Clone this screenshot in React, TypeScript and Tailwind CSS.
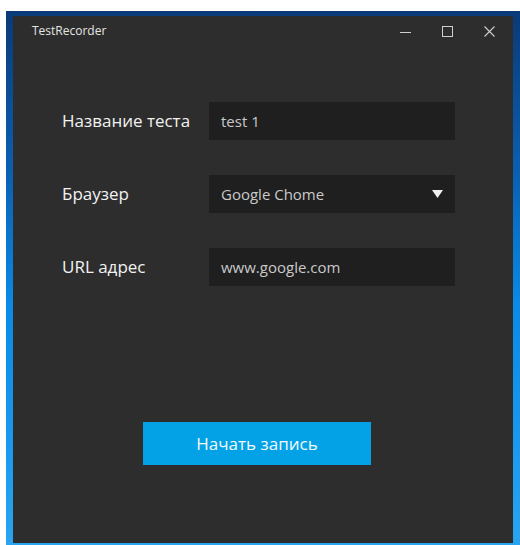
const fields = [
  { label: "Название теста", value: "test 1" },
  { label: "Браузер", value: "Google Chome", select: true },
  { label: "URL адрес", value: "www.google.com" },
];

function TitleBar() {
  return (
    <div className="flex h-[30px] items-center">
      <span className="pl-[19px] text-[12px] text-[#e6e6e6]">TestRecorder</span>
      <div className="ml-auto flex h-full pr-[3px]">
        {/* minimize / maximize / close glyphs */}
        <div className="flex w-[42px] items-center justify-center">
          <svg width="11" height="11" viewBox="0 0 11 11">
            <path d="M0 6.5H11" stroke="#cfcfcf" strokeWidth="1" />
          </svg>
        </div>
        <div className="flex w-[42px] items-center justify-center">
          <svg width="11" height="11" viewBox="0 0 11 11">
            <rect x="0.5" y="0.5" width="10" height="10" fill="none" stroke="#cfcfcf" strokeWidth="1" />
          </svg>
        </div>
        <div className="flex w-[42px] items-center justify-center">
          <svg width="11" height="11" viewBox="0 0 11 11">
            <path d="M0.5 0.5L10.5 10.5M10.5 0.5L0.5 10.5" stroke="#cfcfcf" strokeWidth="1.1" />
          </svg>
        </div>
      </div>
    </div>
  );
}

export default function App() {
  return (
    <div
      className="h-[545px] w-[520px] overflow-hidden bg-white pl-[6px] pt-[11px]"
      style={{ fontFamily: '"Open Sans", "Noto Sans", sans-serif' }}
    >
      <div className="h-full w-full bg-[linear-gradient(180deg,#0a3a78_0%,#0b5fb0_30%,#0a8ae6_55%,#1a98ee_80%,#2aa4f0_100%)] pb-[2px] pl-[7px] pr-[7px] pt-[5px]">
        <div className="flex h-full flex-col bg-[#2d2d2d]">
          <TitleBar />

          <div className="ml-[49px] mt-[56px] grid grid-cols-[147px_246px] gap-y-[35px]">
            {fields.map((f) => (
              <div key={f.label} className="contents">
                <div className="flex h-[38px] items-center text-[17px] text-[#f2f2f2]">
                  {f.label}
                </div>
                <div className="flex h-[38px] items-center bg-[#1f1f1f] pl-[12px] pr-[12px] text-[15px] text-[#c9c9c9]">
                  <span>{f.value}</span>
                  {f.select && (
                    <svg className="ml-auto" width="11" height="8" viewBox="0 0 11 8">
                      <path d="M0 0H11L5.5 8Z" fill="#f0f0f0" />
                    </svg>
                  )}
                </div>
              </div>
            ))}
          </div>

          <button className="ml-[130px] mt-[136px] flex h-[43px] w-[228px] items-center justify-center bg-[#03a2e6] text-[17px] text-[#f2f8fc]">
            Начать запись
          </button>
        </div>
      </div>
    </div>
  );
}
